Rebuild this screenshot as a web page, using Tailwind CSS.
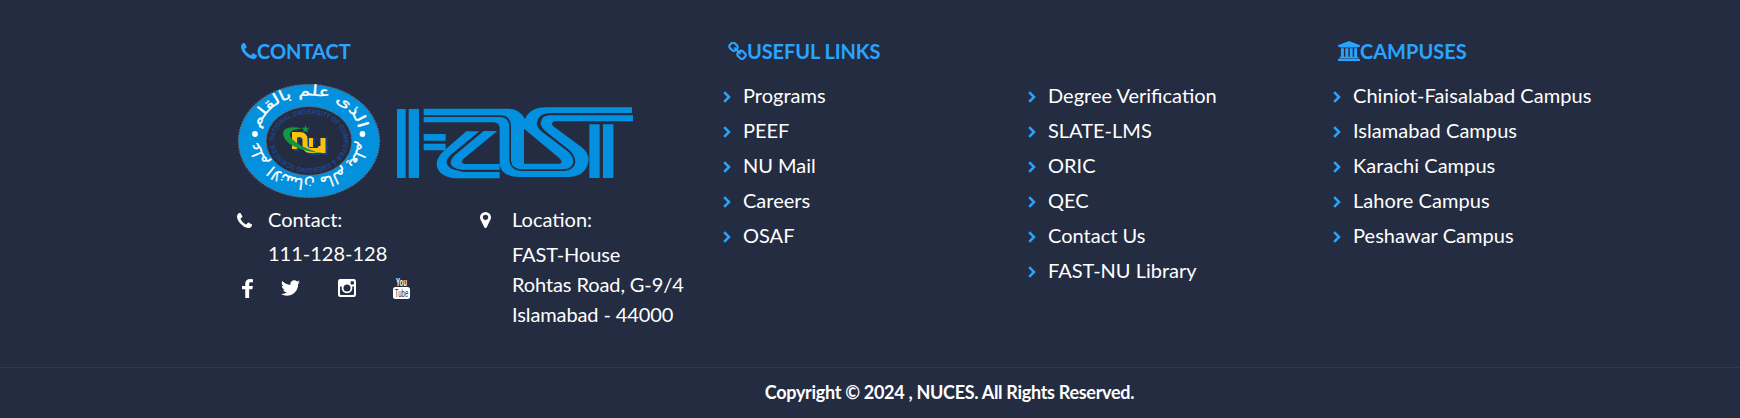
<!DOCTYPE html>
<html lang="en">
<head>
<meta charset="utf-8">
<title>NUCES</title>
<script src="https://cdn.jsdelivr.net/npm/@tailwindcss/browser@4"></script>
</head>
<body class="bg-[#242c42]">
<svg class="hidden">
  <symbol id="phone" viewBox="192 256 1408 1408"><path d="M1600 1240q0 27-10 70.500t-21 68.500q-21 50-122 106-94 51-186 51-27 0-52.500-3.500t-57.500-12.500-47.500-14.500-55.500-20.500-49-18q-98-35-175-83-128-79-264.500-215.500t-215.500-264.500q-48-77-83-175-3-9-18-49t-20.500-55.500-14.500-47.500-12.500-57.500-3.500-52.500q0-92 51-186 56-101 106-122 25-11 68.500-21t70.500-10q14 0 21 3 18 6 53 76 11 19 30 54t35 63.500 31 53.500q3 4 17.500 25t21.500 35.500 7 28.500q0 20-28.500 50t-62 55-62 53-28.500 46q0 9 5 22.500t8.500 20.500 14 24 11.500 19q76 137 174 235t235 174q2 1 19 11.500t24 14 20.500 8.500 22.500 5q18 0 46-28.500t53-62 55-62 50-28.500q14 0 28.500 7t35.500 21.500 25 17.500q25 15 53.500 31t63.500 35 54 30q70 35 76 53 3 7 3 21z" transform="translate(0 128)"/></symbol>
  <symbol id="chev" viewBox="0 0 8 12"><path d="M1.200 1.200 6 6 1.200 10.800" fill="none" stroke="currentColor" stroke-width="2.500"/></symbol>
</svg>
<footer class="flex h-[418px] flex-col bg-[#242c42] font-['Lato',sans-serif] text-[20px] leading-[30px] text-white">
  <div class="flex h-[367px] shrink-0 pl-[237px] pt-[33px]">
    <section class="w-[486px]">
      <h4 class="flex h-9 items-center pl-1 font-bold text-[#2aa4ff]"><svg class="h-4 w-4 shrink-0" fill="currentColor"><use href="#phone"/></svg><span>CONTACT</span></h4>
      <div class="flex h-[134px] pt-[14px]">
        <svg class="h-[116px] w-[144px] overflow-visible" viewBox="0 0 144 116">
          <ellipse cx="72" cy="58" rx="70.500" ry="56.500" fill="#0390dc" stroke="#5f7186" stroke-width="1.300" stroke-dasharray="1.500 1.300"/>
          <ellipse cx="72" cy="58" rx="43" ry="34.500" fill="#242c42" stroke="#5d7188" stroke-width=".8"/>
          <defs>
            <path id="top" d="M22 52A50 39.500 0 0 1 122 52"/>
            <path id="bot" d="M121 56A49 40 0 0 1 23 56"/>
            <path id="ring" d="M37.500 58A34.500 27 0 1 1 106.500 58A34.500 27 0 1 1 37.500 58"/>
          </defs>
          <g fill="#fff" font-family="DejaVu Sans" font-size="15" stroke="#fff" stroke-width=".3">
            <text text-anchor="middle"><textPath href="#top" startOffset="50%" textLength="128" lengthAdjust="spacingAndGlyphs">الذى علم بالقلم</textPath></text>
            <text text-anchor="middle"><textPath href="#bot" startOffset="50%" textLength="136" lengthAdjust="spacingAndGlyphs">علم الانسان مالم يعلم</textPath></text>
          </g>
          <text fill="#1c4794" font-family="Liberation Sans" font-weight="bold" font-size="7"><textPath href="#ring" textLength="190" lengthAdjust="spacingAndGlyphs">NATIONAL UNIVERSITY OF COMPUTER &amp; EMERGING SCIENCES</textPath></text>
          <circle cx="18" cy="51" r="2.900" fill="#fff"/><circle cx="125.500" cy="51" r="2.900" fill="#fff"/>
          <g fill="none" stroke-width="5">
            <path id="n" d="M57.500 66V49M57.500 55Q58 51.500 62.500 51.500 68 51.500 68 57V62Q68 67.500 74 67.500H80Q84 67.500 84 63M76 56H73V60M86 70V55H81" stroke="#173f83" transform="translate(2 2)"/>
            <path d="M57.500 66V49M57.500 55Q58 51.500 62.500 51.500 68 51.500 68 57V62Q68 67.500 74 67.500H80Q84 67.500 84 63M86 70V55" stroke="#f6c40d"/>
            <path d="M74 55V64" stroke="#f6c40d" stroke-width="4"/>
          </g>
          <path d="M66 45.500Q46 41.500 46 51 49 66 82 70 61 63 54 55 49 46.500 66 45.500Z" fill="#149447"/>
          <path d="m68.500 42 1 2.700 3.100.1-2.400 1.800.8 3-2.500-1.700-2.500 1.700.8-3-2.400-1.800 3.100-.1Z" fill="#149447"/>
        </svg>
        <svg class="mt-[23px] ml-[15px] h-[74px] w-[240px]" viewBox="33 33 720 222" fill="#0390df">
          <path d="M36 42h26v207H36zM71 42h31v207H71zM116 117h66v20h-66zM116 146h66v18l-2 2h-64zM613 88h31v161h-31zM654 88h31v161h-31z"/>
          <path d="M116 41H372Q404 42 420 72 434 38 482 37H741V54H492Q459 56 455 86 457 102 480 117L544 166Q565 181 565 202 561 222 536 223H412Q380 222 378 198V94Q376 62 348 61H116Z"/>
          <path d="M116 66H345Q370 66 373 92V195Q376 227 412 228H536Q570 225 571 200 570 178 548 161L488 114Q466 98 467 83 470 61 494 61H744V79H510Q497 81 503 92L582 151Q611 169 611 195 605 243 552 246H403Q348 245 344 207V101Q344 83 326 82H116Z"/>
          <path d="M417 101 520 187Q536 200 525 206H417Z" fill="#242c42"/>
          <path d="M244 109H283L197 180Q171 205 201 222L235 231H344V250H208Q155 243 155 204 157 184 180 164ZM296 108H337L234 193Q226 204 238 207H344V224H231Q195 220 197 200 199 189 210 180Z"/>
        </svg>
      </div>
      <div class="flex">
        <div class="w-[243px]">
          <div class="flex h-[32px] items-center"><svg class="mt-0.5 h-[15px] w-[15px]" fill="currentColor"><use href="#phone"/></svg><span class="ml-4">Contact:</span></div>
          <div class="mt-[3px] pl-[31px]">111-128-128</div>
          <div class="mt-1 flex h-[32px] items-center pl-[5px]">
            <svg class="h-[19px] w-[11px]" viewBox="479 0 864 1664" preserveAspectRatio="none" fill="currentColor"><path d="M1343 12v264h-157q-86 0-116 36t-30 108v189h293l-39 296h-254v759h-306v-759h-255v-296h255v-218q0-186 104-288.500t277-102.500q147 0 228 12z"/></svg>
            <svg class="ml-[28px] h-[16px] w-[19px]" viewBox="108 256 1576 1280" fill="currentColor"><path d="M1684 408q-67 98-162 167 1 14 1 42 0 130-38 259.500t-115.500 248.500-184.500 210.500-258 146-323 54.500q-271 0-496-145 35 4 78 4 225 0 401-138-105-2-188-64.500t-114-159.500q33 5 61 5 43 0 85-11-112-23-185.500-111.500t-73.500-205.500v-4q68 38 146 41-66-44-105-115t-39-154q0-88 44-163 121 149 294.500 238.500t371.500 99.500q-8-38-8-74 0-134 94.500-228.500t228.500-94.500q140 0 236 102 109-21 205-78-37 115-142 178 93-10 186-50z"/></svg>
            <svg class="ml-[38px] h-[18px] w-[18px]" viewBox="0 0 18 18"><rect width="18" height="18" rx="2.300" fill="#fff"/><path d="M2 7.500h1.800a5.400 5.400 0 1 0 10.400 0H16v7.600a.9.900 0 0 1-.9.900H2.900a.9.900 0 0 1-.9-.9Z" fill="#242c42"/><circle cx="9" cy="8.900" r="4.500" fill="#fff"/><circle cx="9" cy="8.900" r="3.500" fill="#242c42"/><rect x="12.600" y="2.200" width="3.300" height="3.200" rx=".7" fill="#242c42"/></svg>
            <svg class="ml-[37px] h-[21px] w-[17px] overflow-visible" viewBox="0 0 17 21" font-family="Liberation Sans Narrow, Liberation Sans"><text x="3" y="8" font-size="10.500" fill="#fff" font-weight="bold" textLength="11" lengthAdjust="spacingAndGlyphs">You</text><rect y="9" width="17" height="12" rx="2.500" fill="#fff"/><text x="1.800" y="18.800" font-size="10" fill="#242c42" textLength="13.500" lengthAdjust="spacingAndGlyphs">Tube</text></svg>
          </div>
        </div>
        <div>
          <div class="flex h-[32px] items-center"><svg class="mt-px h-[16px] w-[11px]" viewBox="384 128 1024 1536" preserveAspectRatio="none" fill="currentColor"><path d="M1152 640q0-106-75-181t-181-75-181 75-75 181 75 181 181 75 181-75 75-181zm256 0q0 109-33 179l-364 774q-16 33-47.500 52t-67.500 19-67.500-19-46.500-52l-365-774q-33-70-33-179 0-212 150-362t362-150 362 150 150 362z"/></svg><span class="ml-[21px]">Location:</span></div>
          <div class="mt-1 pl-8 tracking-[-0.1px]">FAST-House<br>Rohtas Road, G-9/4<br>Islamabad - 44000</div>
        </div>
      </div>
    </section>

    <section class="w-[610px]">
      <h4 class="flex h-9 items-center pl-[5px] font-bold text-[#2aa4ff]"><svg class="h-[19px] w-[19px]" viewBox="64 64 1664 1664" fill="currentColor"><path d="M1520 1216q0-40-28-68l-208-208q-28-28-68-28-42 0-72 32 3 3 19 18.500t21.500 21.500 15 19 13 25.500 3.500 27.500q0 40-28 68t-68 28q-15 0-27.500-3.500t-25.500-13-19-15-21.500-21.500-18.500-19q-33 31-33 73 0 40 28 68l206 207q27 27 68 27 40 0 68-26l147-146q28-28 28-67zm-703-705q0-40-28-68l-206-207q-28-28-68-28-39 0-68 27l-147 146q-28 28-28 67 0 40 28 68l208 208q27 27 68 27 42 0 72-31-3-3-19-18.500t-21.500-21.500-15-19-13-25.500-3.500-27.500q0-40 28-68t68-28q15 0 27.500 3.500t25.500 13 19 15 21.500 21.500 18.500 19q33-31 33-73zm895 705q0 120-85 203l-147 146q-83 83-203 83-121 0-204-85l-206-207q-83-83-83-203 0-123 88-209l-88-88q-86 88-208 88-120 0-204-84l-208-208q-84-84-84-204t85-203l147-146q83-83 203-83 121 0 204 85l206 207q83 83 83 203 0 123-88 209l88 88q86-88 208-88 120 0 204 84l208 208q84 84 84 204z"/></svg><span class="tracking-[-0.1px]">USEFUL LINKS</span></h4>
      <div class="flex pt-2">
        <ul class="w-[305px]">
          <li class="flex h-[35px] items-center gap-[12px]"><svg class="mt-[5px] h-3 w-2 text-[#2aa4ff]"><use href="#chev"/></svg>Programs</li>
          <li class="flex h-[35px] items-center gap-[12px]"><svg class="mt-[5px] h-3 w-2 text-[#2aa4ff]"><use href="#chev"/></svg>PEEF</li>
          <li class="flex h-[35px] items-center gap-[12px]"><svg class="mt-[5px] h-3 w-2 text-[#2aa4ff]"><use href="#chev"/></svg>NU Mail</li>
          <li class="flex h-[35px] items-center gap-[12px]"><svg class="mt-[5px] h-3 w-2 text-[#2aa4ff]"><use href="#chev"/></svg>Careers</li>
          <li class="flex h-[35px] items-center gap-[12px]"><svg class="mt-[5px] h-3 w-2 text-[#2aa4ff]"><use href="#chev"/></svg>OSAF</li>
        </ul>
        <ul class="w-[305px]">
          <li class="flex h-[35px] items-center gap-[12px]"><svg class="mt-[5px] h-3 w-2 text-[#2aa4ff]"><use href="#chev"/></svg>Degree Verification</li>
          <li class="flex h-[35px] items-center gap-[12px]"><svg class="mt-[5px] h-3 w-2 text-[#2aa4ff]"><use href="#chev"/></svg>SLATE-LMS</li>
          <li class="flex h-[35px] items-center gap-[12px]"><svg class="mt-[5px] h-3 w-2 text-[#2aa4ff]"><use href="#chev"/></svg>ORIC</li>
          <li class="flex h-[35px] items-center gap-[12px]"><svg class="mt-[5px] h-3 w-2 text-[#2aa4ff]"><use href="#chev"/></svg>QEC</li>
          <li class="flex h-[35px] items-center gap-[12px]"><svg class="mt-[5px] h-3 w-2 text-[#2aa4ff]"><use href="#chev"/></svg>Contact Us</li>
          <li class="flex h-[35px] items-center gap-[12px]"><svg class="mt-[5px] h-3 w-2 text-[#2aa4ff]"><use href="#chev"/></svg>FAST-NU Library</li>
        </ul>
      </div>
    </section>

    <section>
      <h4 class="flex h-9 items-center pl-[5px] font-bold text-[#2aa4ff]"><svg class="h-5 w-[22px]" viewBox="0 0 1920 1792" preserveAspectRatio="none" fill="currentColor"><path d="M960 0l960 384v128h-128q0 26-20.500 45t-48.500 19h-1526q-28 0-48.500-19t-20.500-45h-128v-128zm-704 640h256v768h128v-768h256v768h128v-768h256v768h128v-768h256v768h59q28 0 48.500 19t20.500 45v64h-1664v-64q0-26 20.500-45t48.500-19h59v-768zm1595 960q28 0 48.500 19t20.500 45v128h-1920v-128q0-26 20.500-45t48.500-19h1782z"/></svg><span>CAMPUSES</span></h4>
      <ul class="pt-2 tracking-[0.05px]">
        <li class="flex h-[35px] items-center gap-[12px]"><svg class="mt-[5px] h-3 w-2 text-[#2aa4ff]"><use href="#chev"/></svg>Chiniot-Faisalabad Campus</li>
        <li class="flex h-[35px] items-center gap-[12px]"><svg class="mt-[5px] h-3 w-2 text-[#2aa4ff]"><use href="#chev"/></svg>Islamabad Campus</li>
        <li class="flex h-[35px] items-center gap-[12px]"><svg class="mt-[5px] h-3 w-2 text-[#2aa4ff]"><use href="#chev"/></svg>Karachi Campus</li>
        <li class="flex h-[35px] items-center gap-[12px]"><svg class="mt-[5px] h-3 w-2 text-[#2aa4ff]"><use href="#chev"/></svg>Lahore Campus</li>
        <li class="flex h-[35px] items-center gap-[12px]"><svg class="mt-[5px] h-3 w-2 text-[#2aa4ff]"><use href="#chev"/></svg>Peshawar Campus</li>
      </ul>
    </section>
  </div>
  <div class="flex h-[51px] items-center justify-center border-t border-[#2f384e] pb-0.5 pl-[159px] text-[18px] font-bold tracking-[-0.3px]">Copyright © 2024 , NUCES. All Rights Reserved.</div>
</footer>
</body>
</html>
